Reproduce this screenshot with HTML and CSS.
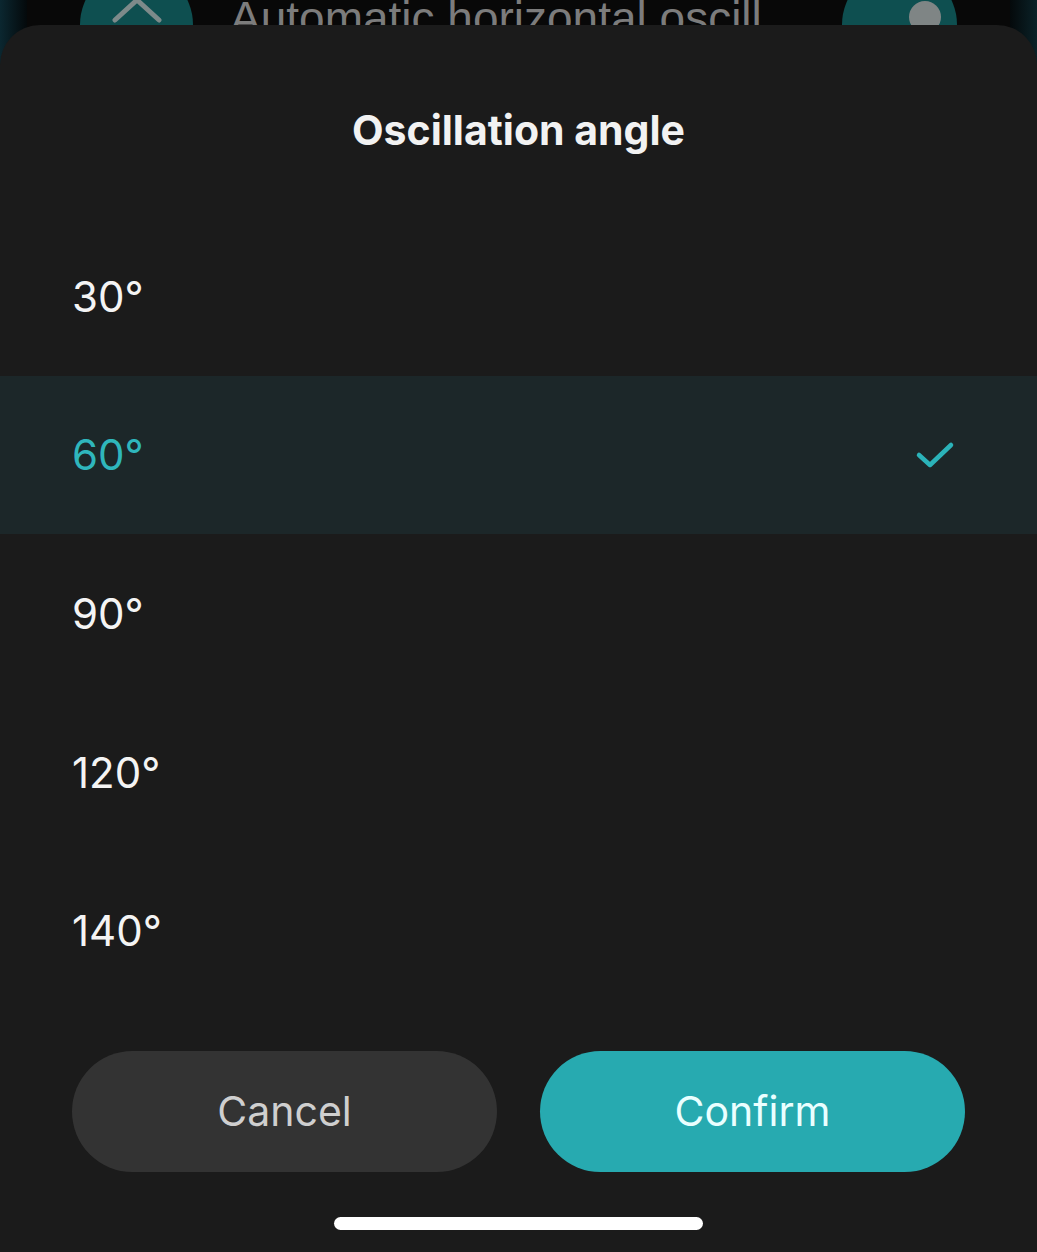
FILE: index.html
```html
<!DOCTYPE html>
<html lang="en">
<head>
<meta charset="utf-8">
<title>Oscillation angle</title>
<link rel="stylesheet" href="styles.css">
</head>
<body>
<div class="screen">
  <div class="backdrop">
    <div class="card">
      <div class="card-row">
        <div class="round-btn">
          <svg class="chev" viewBox="0 0 60 40" width="60" height="40" aria-hidden="true">
            <path d="M8 26 L30 6 L52 26" fill="none" stroke="#7d8a8a" stroke-width="5" stroke-linecap="round" stroke-linejoin="round"/>
            <path d="M12 38 L18 34 M48 38 L42 34" fill="none" stroke="#7d8a8a" stroke-width="4" stroke-linecap="round"/>
          </svg>
        </div>
        <span class="card-label">Automatic horizontal oscill</span>
        <div class="toggle"><span class="knob"></span></div>
      </div>
    </div>
  </div>

  <section class="sheet">
    <h1 class="sheet-title">Oscillation angle</h1>
    <ul class="options">
      <li class="option">30°</li>
      <li class="option selected">60°
        <svg class="check" viewBox="0 0 40 28" width="40" height="28" aria-hidden="true">
          <path d="M4 14 L15 24 L36 4" fill="none" stroke="#2bb3b9" stroke-width="4.5" stroke-linecap="round" stroke-linejoin="round"/>
        </svg>
      </li>
      <li class="option">90°</li>
      <li class="option">120°</li>
      <li class="option">140°</li>
    </ul>
    <div class="actions">
      <button class="btn btn-cancel">Cancel</button>
      <button class="btn btn-confirm">Confirm</button>
    </div>
    <div class="home-indicator"></div>
  </section>
</div>
</body>
</html>
```

FILE: styles.css
```css
* { box-sizing: border-box; }

html, body {
  margin: 0;
  padding: 0;
}

body {
  width: 1037px;
  height: 1252px;
  overflow: hidden;
  background: #1b1b1b;
  font-family: Inter, "Noto Sans", "Liberation Sans", sans-serif;
}

.screen {
  width: 1037px;
  height: 1252px;
  display: flex;
  flex-direction: column;
}

.backdrop {
  height: 70px;
  flex: none;
  background: linear-gradient(90deg, #0b2730 0px, #04090b 27px, #04090b 1010px, #0b2228 1037px);
  padding: 0 27px;
  overflow: hidden;
}

.card {
  height: 100%;
  background: #080808;
}

.card-row {
  display: flex;
  align-items: flex-start;
  margin-top: -32px;
  padding-left: 53px;
}

.round-btn {
  width: 113px;
  height: 113px;
  border-radius: 50%;
  background: #0e4f50;
  flex: none;
  display: flex;
  justify-content: center;
  padding-top: 26px;
}

.chev { display: block; }

.card-label {
  margin-left: 37px;
  margin-top: 24px;
  font-family: "Liberation Sans", Arial, sans-serif;
  font-size: 46px;
  line-height: 53px;
  color: #7c7c7c;
  white-space: nowrap;
  width: 575px;
  flex: none;
  overflow: hidden;
}

.toggle {
  margin-left: 37px;
  width: 115px;
  height: 113px;
  border-radius: 57px;
  background: #0e4f50;
  flex: none;
  position: relative;
}

.knob {
  position: absolute;
  left: 67px;
  top: 33px;
  width: 32px;
  height: 32px;
  border-radius: 50%;
  background: #7f8585;
}

.sheet {
  margin-top: -45px;
  flex: 1;
  background: #1b1b1b;
  border-radius: 40px 40px 0 0;
  display: flex;
  flex-direction: column;
  position: relative;
}

.sheet-title {
  margin: 0;
  padding-top: 80px;
  height: 192px;
  line-height: 50px;
  text-align: center;
  font-size: 41px;
  font-weight: 700;
  color: #f2f2f2;
}

.options {
  list-style: none;
  margin: 0;
  padding: 0;
}

.option {
  height: 158.6px;
  display: flex;
  align-items: center;
  justify-content: space-between;
  padding: 0 82px 0 72px;
  font-size: 42px;
  color: #f4f4f4;
}

.option.selected {
  background: #1c2729;
  color: #2fb6bc;
}

.check { display: block; }

.actions {
  display: flex;
  gap: 43px;
  padding: 0 72px;
  margin-top: 41px;
}

.btn {
  flex: 1;
  height: 121px;
  border: none;
  border-radius: 61px;
  font-family: Inter, "Noto Sans", "Liberation Sans", sans-serif;
  font-size: 41px;
  font-weight: 400;
}

.btn-cancel {
  background: #333333;
  color: #cfcfcf;
}

.btn-confirm {
  background: #27aab0;
  color: #eaffff;
}

.home-indicator {
  width: 369px;
  height: 13px;
  border-radius: 7px;
  background: #ffffff;
  margin: 45px auto 0;
}
```
